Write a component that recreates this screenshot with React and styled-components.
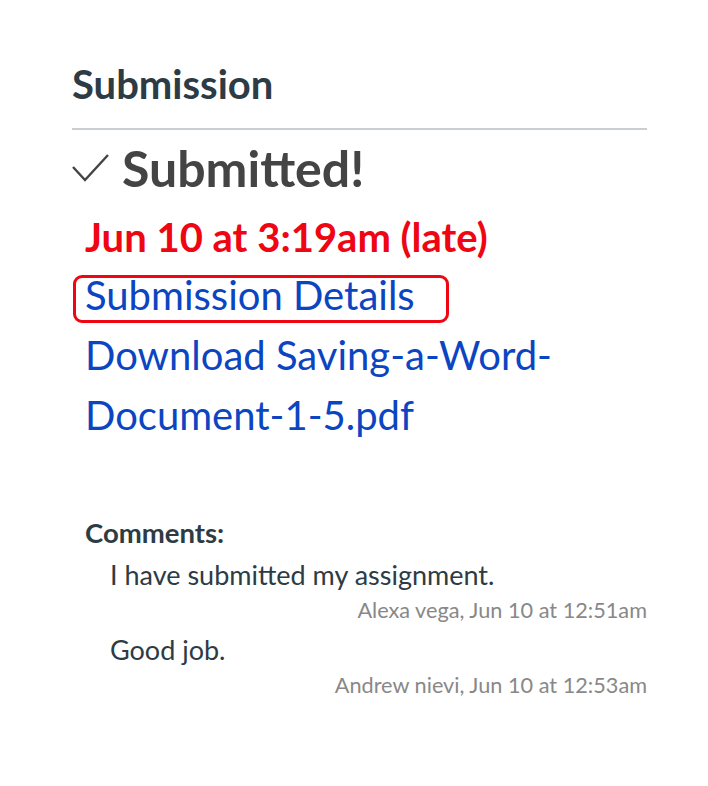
import React from "react";
import styled, { createGlobalStyle } from "styled-components";

const GlobalStyle = createGlobalStyle`
  body {
    margin: 0;
    background: #fff;
    font-family: Lato, "Liberation Sans", sans-serif;
  }
`;

const Page = styled.div`
  padding: 60px 61px 0 72px;
`;

const Title = styled.h2`
  margin: 0;
  font-size: 40px;
  font-weight: 700;
  line-height: 48px;
  color: #2d3b45;
  padding-bottom: 20px;
  border-bottom: 2px solid #c9ced2;
`;

const Status = styled.div`
  display: flex;
  align-items: center;
  gap: 13px;
  margin-top: 3px;
  font-size: 50px;
  font-weight: 700;
  line-height: 70px;
  color: #444;
`;

const Details = styled.div`
  padding-left: 13px;
  display: flex;
  flex-direction: column;
  align-items: flex-start;
`;

const Late = styled.div`
  margin-top: 6px;
  font-size: 40px;
  font-weight: 700;
  line-height: 56px;
  color: #ee0612;
`;

const Link = styled.a`
  font-size: 40px;
  line-height: 60px;
  color: #0b45c2;
  text-decoration: none;
  position: relative;
  ${(p) =>
    p.$marked &&
    `
    &::after {
      content: "";
      position: absolute;
      left: -12px;
      right: -34px;
      top: 10px;
      bottom: 2px;
      border: 3px solid #ee0612;
      border-radius: 9px;
    }
  `}
`;

const Comments = styled.div`
  margin-top: 71px;
  padding-left: 13px;
`;

const CommentsLabel = styled.div`
  font-size: 27.5px;
  font-weight: 700;
  color: #2d3b45;
  line-height: 34px;
  margin-bottom: 5px;
`;

const Comment = styled.div`
  padding-left: 25px;
  margin-bottom: 5px;
`;

const CommentText = styled.div`
  font-size: 27px;
  line-height: 40px;
  color: #2d3b45;
`;

const CommentMeta = styled.div`
  text-align: right;
  font-size: 21.7px;
  line-height: 30px;
  color: #888;
`;

const Check = () => (
  <svg width="37" height="28" viewBox="0 0 37 28" fill="none">
    <path d="M1 13 L13 26 L36 1" stroke="#444" strokeWidth="2.4" />
  </svg>
);

const comments = [
  { text: "I have submitted my assignment.", meta: "Alexa vega, Jun 10 at 12:51am" },
  { text: "Good job.", meta: "Andrew nievi, Jun 10 at 12:53am" },
];

export default function App() {
  return (
    <>
      <GlobalStyle />
      <Page>
        <Title>Submission</Title>
        <Status>
          <Check />
          Submitted!
        </Status>
        <Details>
          <Late>Jun 10 at 3:19am (late)</Late>
          <Link href="#" $marked>Submission Details</Link>
          <Link href="#">
            Download Saving-a-Word-
            <br />
            Document-1-5.pdf
          </Link>
        </Details>
        <Comments>
          <CommentsLabel>Comments:</CommentsLabel>
          {comments.map((c) => (
            <Comment key={c.meta}>
              <CommentText>{c.text}</CommentText>
              <CommentMeta>{c.meta}</CommentMeta>
            </Comment>
          ))}
        </Comments>
      </Page>
    </>
  );
}
